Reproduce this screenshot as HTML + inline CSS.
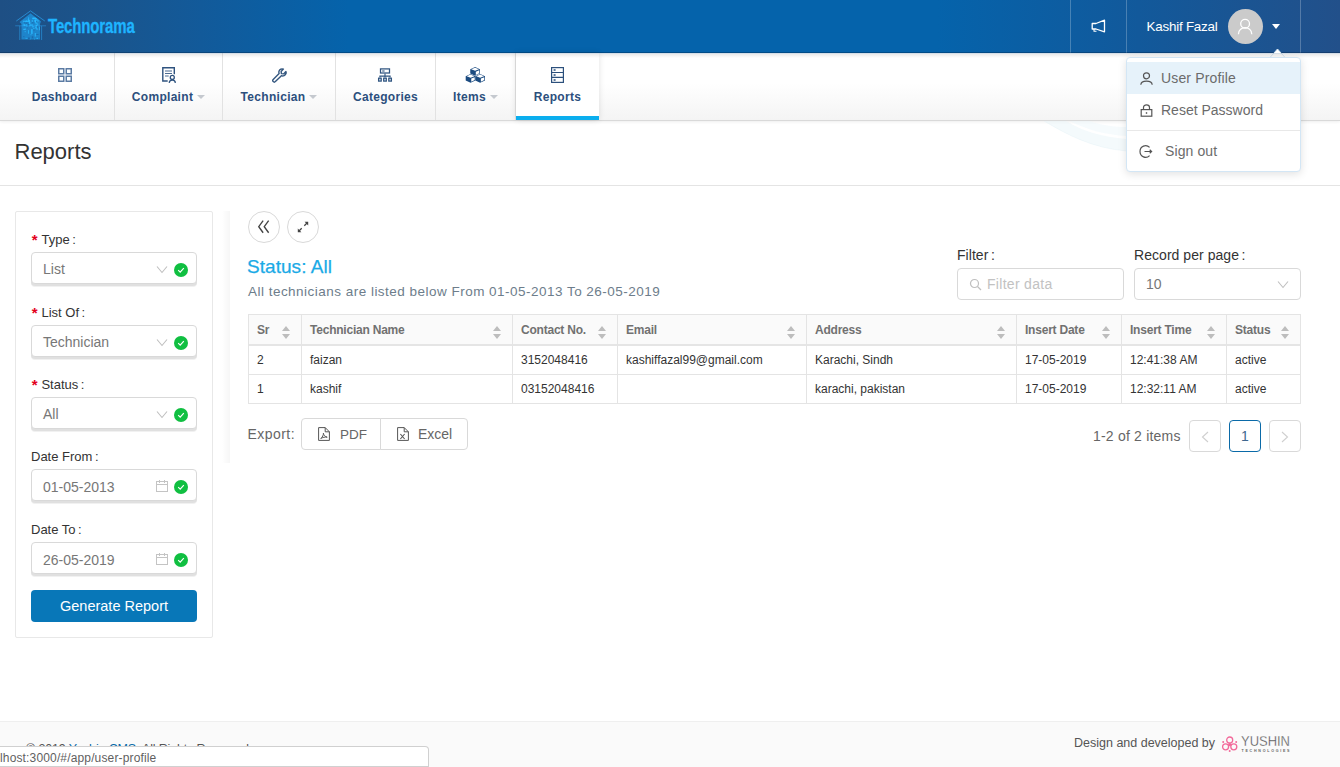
<!DOCTYPE html>
<html>
<head>
<meta charset="utf-8">
<title>Reports</title>
<style>
*{box-sizing:border-box;margin:0;padding:0}
html,body{width:1340px;height:767px;overflow:hidden;background:#fff;font-family:"Liberation Sans",sans-serif;color:#555}
.abs{position:absolute}
.t{position:absolute;white-space:nowrap;line-height:1}
#hdr{left:0;top:0;width:1340px;height:53px;background:linear-gradient(90deg,#1e4f84 0%,#1b548b 7%,#125a9a 15%,#0563ab 26%,#0563ab 70%,#12599b 85%,#22508a 100%)}
#hdr .vl{position:absolute;top:0;width:1px;height:53px;background:rgba(255,255,255,.24)}
#hdr:after{content:"";position:absolute;left:0;right:0;bottom:0;height:1px;background:rgba(0,20,50,.28)}
#hsh{left:0;top:53px;width:1340px;height:5px;background:linear-gradient(180deg,rgba(60,110,160,.28) 0%,rgba(0,0,0,.07) 30%,rgba(0,0,0,0) 100%);z-index:3}
#nav{left:0;top:53px;width:1340px;height:68px;background:linear-gradient(180deg,#ffffff 0%,#ffffff 45%,#f4f4f4 100%);border-bottom:1px solid #d9d9d9;box-shadow:0 1px 3px rgba(0,0,0,.07)}
.ni{position:absolute;top:0;height:67px;border-right:1px solid #e2e2e2}
.ni .lb{position:absolute;left:0;right:0;letter-spacing:.3px;top:37px;text-align:center;font-weight:bold;font-size:12px;color:#2c4f7d;line-height:14px;white-space:nowrap}
.ni svg{position:absolute}
.caret{display:inline-block;width:0;height:0;border-left:4px solid transparent;border-right:4px solid transparent;border-top:4px solid #c5c9cf;vertical-align:middle;margin-left:4px;position:relative;top:-1px}

#ptitle{left:14.5px;top:141px;font-size:22px;color:#333;letter-spacing:0}
#pline{left:0;top:185px;width:1340px;height:1px;background:#e4e4e4}
#card{left:15px;top:211px;width:198px;height:427px;border:1px solid #e8e8e8;border-radius:2px;background:#fff}
.flb{position:absolute;left:31px;font-size:13px;color:#333;white-space:nowrap;line-height:1;letter-spacing:0}
.flb b,.lb14 b{font-weight:normal;margin-left:2.5px}
.flb i{font-style:normal;color:#e3001b;font-size:15px;font-weight:bold;margin-right:4.6px;position:relative;top:1.2px;left:.8px;line-height:0;font-family:"Liberation Sans",sans-serif}
.fbox{position:absolute;left:31px;width:166px;height:32px;border:1px solid #d9d9d9;border-radius:4px;background:#fff;box-shadow:0 2px 0 #e0e0e0,0 3px 0 #f1f1f1}
.fbox .v{position:absolute;left:11px;top:8px;font-size:14px;color:#777;line-height:16px;white-space:nowrap}
.fbox .ok{position:absolute;left:142px;top:10px;width:14px;height:14px}
.fbox .chev{position:absolute;left:124px;top:12px;width:12px;height:9px}
.fbox .cal{position:absolute;left:123px;top:9px;width:14px;height:14px}
#gen{left:31px;top:590px;width:166px;height:32px;background:#0877b8;border-radius:4px;color:#fff;font-size:14.5px;text-align:center;line-height:32px}
#pshadow{left:222px;top:211px;width:8px;height:252px;background:linear-gradient(90deg,rgba(0,0,0,0) 0%,rgba(0,0,0,.035) 100%)}
.cbtn{position:absolute;top:211px;width:32px;height:32px;border:1px solid #d9d9d9;border-radius:50%;background:#fff}
#st{left:247px;top:257px;font-size:19px;color:#1baae6;letter-spacing:.05px;-webkit-text-stroke:.25px #1baae6}
#sub{left:248px;top:285px;font-size:13.5px;color:#6d7d8b;letter-spacing:.48px}

.lb14{position:absolute;font-size:14px;color:#333;white-space:nowrap;line-height:1;letter-spacing:.05px}
.ibox{position:absolute;top:268px;height:32px;border:1px solid #d9d9d9;border-radius:4px;background:#fff}
#tbl{left:248px;top:314px;width:1053px;height:90px;border:1px solid #e4e4e4;background:#fff}
#thead{left:0;top:0;width:1051px;height:31px;background:#fafafa;border-bottom:2px solid #e5e5e5}
.hl{position:absolute;left:0;width:1051px;height:1px;background:#e4e4e4}
.vl2{position:absolute;top:0;width:1px;height:88px;background:#e4e4e4}
.th{position:absolute;top:9px;font-size:12px;font-weight:bold;color:#717171;white-space:nowrap;line-height:1;letter-spacing:-.22px}
.td{position:absolute;font-size:12px;color:#333;white-space:nowrap;line-height:1}
.srt{position:absolute;top:10.5px;width:8px;height:13px}
#exl{left:247.5px;top:427px;font-size:14px;color:#666;letter-spacing:.45px}
.ebtn{position:absolute;top:418px;height:32px;border:1px solid #d9d9d9;background:#fff;font-size:14px;color:#666}
.ebtn span{position:absolute;top:8px;line-height:1;white-space:nowrap}
.ebtn svg{position:absolute;top:8px;width:12px;height:14px}
#pgt{left:1093px;top:429px;font-size:14px;color:#666;letter-spacing:.2px}
.pg{position:absolute;top:420px;width:32px;height:32px;border:1px solid #d9d9d9;border-radius:4px;background:#fff}

#logo-t{left:48px;top:17px;font-size:19.5px;font-weight:bold;color:#1eb4ff;transform-origin:0 0;transform:scaleX(.77);letter-spacing:-.2px;-webkit-text-stroke:.3px #1eb4ff}
#uname{left:1146.5px;top:19.5px;font-size:13.4px;color:#fff;letter-spacing:-.22px}
#avatar{left:1228px;top:9px;width:35px;height:35px;border-radius:50%;background:#cbcbcb}
#ucaret{left:1272px;top:24px;width:0;height:0;border-left:4.5px solid transparent;border-right:4.5px solid transparent;border-top:5px solid #fff}
#dd{left:1126px;top:57px;width:175px;height:115px;background:#fff;border:1px solid #d3e6f5;border-radius:4px;box-shadow:0 2px 8px rgba(0,0,0,.12)}
#ddarrow{left:1270px;top:49px;width:0;height:0;border-left:8px solid transparent;border-right:8px solid transparent;border-bottom:9px solid #fff}
.ddi{position:absolute;font-size:14px;color:#6b6b6b;white-space:nowrap;line-height:1}
#foot{left:0;top:721px;width:1340px;height:46px;background:#fafafa;border-top:1px solid #efefef}
#sbar{left:0;top:746px;width:429px;height:21px;border-bottom:none;background:#fff;border:1px solid #d0d0d0;border-left:none;border-radius:0 4px 0 0}
</style>
</head>
<body>
<!-- top header -->
<div id="hdr" class="abs">
  <div class="vl" style="left:1070px"></div>
  <div class="vl" style="left:1126px"></div>
  <div class="vl" style="left:1300px"></div>
</div>
<div id="hsh" class="abs"></div>
<!-- nav -->
<div id="nav" class="abs">
  <div class="ni" style="left:0;width:115px"><svg style="left:58px;top:15px" width="14" height="14" viewBox="0 0 14 14" fill="none" stroke="#5b7ba3" stroke-width="1.5"><rect x=".75" y=".75" width="5" height="5"/><rect x="8.25" y=".75" width="5" height="5"/><rect x=".75" y="8.25" width="5" height="5"/><rect x="8.25" y="8.25" width="5" height="5"/></svg><div class="lb" style="left:15px">Dashboard</div></div>
  <div class="ni" style="left:115px;width:108px"><svg style="left:46px;top:13px" width="16" height="18" viewBox="0 0 16 18" fill="none" stroke="#2f537f" stroke-width="1.4"><path d="M6.7 15 H1.8 V1.8 H13.3 V8.3"/><path d="M4 5 H11 M4 7.5 H11 M4 10 H7.7" stroke-width="1.1" stroke="#4d6d94"/><circle cx="11.3" cy="11.4" r="2" stroke-width="1.3"/><path d="M8.2 16.9 C8.6 13.3 14 13.3 14.4 16.9" stroke-width="1.3"/></svg><div class="lb">Complaint<span class="caret"></span></div></div>
  <div class="ni" style="left:223px;width:113px"><svg style="left:49px;top:15px" width="15" height="15" viewBox="0 0 15 15" fill="none" stroke="#34577f" stroke-width="1.4" stroke-linejoin="round"><path d="M13.9 3.6 L11.6 5.9 L9.4 5.6 L9.1 3.4 L11.4 1.1 C9.6 .4 7.6 1.3 7 3.2 C6.8 4 6.8 4.8 7.1 5.5 L1.2 11.4 C.6 12 .6 13 1.2 13.6 C1.8 14.2 2.8 14.2 3.4 13.6 L9.4 7.7 C11.2 8.4 13.3 7.5 14 5.6 C14.2 5 14.2 4.3 13.9 3.6 Z"/></svg><div class="lb">Technician<span class="caret"></span></div></div>
  <div class="ni" style="left:336px;width:100px"><svg style="left:41px;top:15px" width="16" height="14" viewBox="0 0 16 14" fill="none" stroke="#2f5480" stroke-width="1.25"><rect x="3.5" y=".9" width="9" height="4.1"/><path d="M5.2 3 H7.6" stroke-width="1.1"/><path d="M8 5.6 V8.1 M2.9 9.6 V8.1 H13.1 V9.6 M8 8.1 V9.6" stroke-width="1.1"/><rect x="1.6" y="10.2" width="2.6" height="2.9" fill="#dfe6ee"/><rect x="6.7" y="10.2" width="2.6" height="2.9" fill="#dfe6ee"/><rect x="11.8" y="10.2" width="2.6" height="2.9" fill="#dfe6ee"/></svg><div class="lb">Categories</div></div>
  <div class="ni" style="left:436px;width:80px"><svg style="left:29px;top:14px" width="21" height="17" viewBox="0 0 21 17"><path d="M10.10 0.10 L14.95 2.27 V6.62 L10.10 8.80 L5.25 6.62 V2.27 Z" fill="#1b4b80"/><path d="M10.10 0.70 L13.95 2.27 L10.10 3.85 L6.25 2.27 Z" fill="#fff"/><path d="M10.80 4.65 L14.25 3.27 V6.22 L10.80 7.90 Z" fill="#fff"/><path d="M5.55 7.00 L10.40 9.18 V13.52 L5.55 15.70 L0.70 13.52 V9.18 Z" fill="#1b4b80"/><path d="M5.55 7.60 L9.40 9.18 L5.55 10.75 L1.70 9.18 Z" fill="#fff"/><path d="M6.25 11.55 L9.70 10.18 V13.12 L6.25 14.80 Z" fill="#fff"/><path d="M15.15 7.00 L20.00 9.18 V13.52 L15.15 15.70 L10.30 13.52 V9.18 Z" fill="#1b4b80"/><path d="M15.15 7.60 L19.00 9.18 L15.15 10.75 L11.30 9.18 Z" fill="#fff"/><path d="M15.85 11.55 L19.30 10.18 V13.12 L15.85 14.80 Z" fill="#fff"/></svg><div class="lb">Items<span class="caret"></span></div></div>
  <div class="ni" id="act" style="left:516px;width:83px;background:#fff;border-right:none;box-shadow:0 0 6px rgba(0,0,0,.12)"><svg style="left:35px;top:14px" width="13" height="16" viewBox="0 0 13 16" fill="none" stroke="#2c507c" stroke-width="1.2"><rect x=".6" y=".6" width="11.8" height="14.8"/><path d="M.6 5.5 H12.4 M.6 10.4 H12.4"/><path d="M2.6 3 H4.6 M2.6 8 H4.6 M2.6 13 H4.6" stroke-width="1.4"/></svg><div class="lb">Reports</div><div class="abs" style="left:0;right:0;bottom:0;height:4px;background:#0baeee"></div></div>
</div>

<!-- page title -->
<svg class="abs" style="left:1030px;top:121px" width="110" height="50" viewBox="0 0 110 50"><path d="M14 0 C38 14 62 27 97 30 L97 18 C72 16 52 10 36 0 Z" fill="#e6f4f8" opacity=".45"/><path d="M40 0 C55 8 75 14 97 15 L97 6 C85 6 70 4 60 0 Z" fill="#ecf7fa" opacity=".45"/><path d="M14 0 C38 14 62 27 97 30" fill="none" stroke="#e6f3f7" stroke-width=".8" opacity=".6"/></svg>
<div id="ptitle" class="t">Reports</div>
<div id="pline" class="abs"></div>
<!-- sidebar card -->
<div id="card" class="abs"></div>
<div class="flb" style="top:233px"><i>*</i>Type<b>:</b></div>
<div class="fbox" style="top:252px"><div class="v">List</div><svg class="chev" viewBox="0 0 12 9" fill="none" stroke="#bfbfbf" stroke-width="1.1"><path d="M1 1.5 L6 7.5 L11 1.5"/></svg> <svg class="ok" viewBox="0 0 14 14"><circle cx="7" cy="7" r="7" fill="#10bf41"/><path d="M4.2 7.2 L6.2 9.2 L9.8 5.2" fill="none" stroke="#fff" stroke-width="1.15"/></svg></div>
<div class="flb" style="top:306px"><i>*</i>List Of<b>:</b></div>
<div class="fbox" style="top:325px"><div class="v">Technician</div><svg class="chev" viewBox="0 0 12 9" fill="none" stroke="#bfbfbf" stroke-width="1.1"><path d="M1 1.5 L6 7.5 L11 1.5"/></svg> <svg class="ok" viewBox="0 0 14 14"><circle cx="7" cy="7" r="7" fill="#10bf41"/><path d="M4.2 7.2 L6.2 9.2 L9.8 5.2" fill="none" stroke="#fff" stroke-width="1.15"/></svg></div>
<div class="flb" style="top:378px"><i>*</i>Status<b>:</b></div>
<div class="fbox" style="top:397px"><div class="v">All</div><svg class="chev" viewBox="0 0 12 9" fill="none" stroke="#bfbfbf" stroke-width="1.1"><path d="M1 1.5 L6 7.5 L11 1.5"/></svg> <svg class="ok" viewBox="0 0 14 14"><circle cx="7" cy="7" r="7" fill="#10bf41"/><path d="M4.2 7.2 L6.2 9.2 L9.8 5.2" fill="none" stroke="#fff" stroke-width="1.15"/></svg></div>
<div class="flb" style="top:450px">Date From<b>:</b></div>
<div class="fbox" style="top:469px"><div class="v" style="top:9px">01-05-2013</div><svg class="cal" viewBox="0 0 14 14" fill="none" stroke="#c4c4c4" stroke-width="1"><rect x="1.5" y="2.5" width="11" height="10"/><path d="M1.5 5.5 H12.5 M4.5 1 V4 M9.5 1 V4"/></svg> <svg class="ok" viewBox="0 0 14 14"><circle cx="7" cy="7" r="7" fill="#10bf41"/><path d="M4.2 7.2 L6.2 9.2 L9.8 5.2" fill="none" stroke="#fff" stroke-width="1.15"/></svg></div>
<div class="flb" style="top:523px">Date To<b>:</b></div>
<div class="fbox" style="top:542px"><div class="v" style="top:9px">26-05-2019</div><svg class="cal" viewBox="0 0 14 14" fill="none" stroke="#c4c4c4" stroke-width="1"><rect x="1.5" y="2.5" width="11" height="10"/><path d="M1.5 5.5 H12.5 M4.5 1 V4 M9.5 1 V4"/></svg> <svg class="ok" viewBox="0 0 14 14"><circle cx="7" cy="7" r="7" fill="#10bf41"/><path d="M4.2 7.2 L6.2 9.2 L9.8 5.2" fill="none" stroke="#fff" stroke-width="1.15"/></svg></div>
<div id="gen" class="abs">Generate Report</div>
<!-- right panel -->
<div id="pshadow" class="abs"></div>
<div class="cbtn" style="left:248px"><svg class="abs" style="left:7.3px;top:7.3px" width="15.4" height="15.4" viewBox="0 0 14 14" fill="none" stroke="#444" stroke-width="1.25"><path d="M6.5 1.5 L2.5 7 L6.5 12.5 M11.5 1.5 L7.5 7 L11.5 12.5"/></svg></div>
<div class="cbtn" style="left:287px"><svg class="abs" style="left:9px;top:9px" width="12" height="12" viewBox="0 0 12 12" fill="none" stroke="#444" stroke-width="1.2"><path d="M7.3 4.7 L10.5 1.5 M4.7 7.3 L1.5 10.5" stroke-width="1.3"/><path d="M7.6 .8 H11.2 V4.4 Z M.8 7.6 V11.2 H4.4 Z" fill="#444" stroke="none"/></svg></div>
<div id="st" class="t">Status: All</div>
<div id="sub" class="t">All technicians are listed below From 01-05-2013 To 26-05-2019</div>

<div class="lb14" style="left:957px;top:248px">Filter<b>:</b></div>
<div class="ibox" style="left:957px;width:167px"><svg class="abs" style="left:11px;top:9px" width="13" height="13" viewBox="0 0 13 13" fill="none" stroke="#bfbfbf" stroke-width="1.2"><circle cx="5.5" cy="5.5" r="4"/><path d="M8.5 8.5 L12 12"/></svg><div class="t" style="left:29px;top:8px;font-size:14px;color:#c2c2c2;letter-spacing:.3px">Filter data</div></div>
<div class="lb14" style="left:1134px;top:248px">Record per page<b>:</b></div>
<div class="ibox" style="left:1134px;width:167px"><div class="t" style="left:11px;top:8px;font-size:14px;color:#777">10</div><svg class="abs" style="left:142px;top:11px" width="12" height="9" viewBox="0 0 12 9" fill="none" stroke="#bfbfbf" stroke-width="1.1"><path d="M1 1.5 L6 7.5 L11 1.5"/></svg></div>
<div id="tbl" class="abs"><div id="thead" class="abs"></div><div class="hl" style="top:59px"></div><div class="vl2" style="left:52px"></div><div class="vl2" style="left:263px"></div><div class="vl2" style="left:368px"></div><div class="vl2" style="left:557px"></div><div class="vl2" style="left:767px"></div><div class="vl2" style="left:872px"></div><div class="vl2" style="left:977px"></div><div class="th" style="left:8px">Sr</div><svg class="srt" style="left:33px" viewBox="0 0 8 13"><path d="M4 0 L8 5 H0 Z M4 13 L8 8 H0 Z" fill="#bdbdbd"/></svg><div class="td" style="left:8px;top:39px">2</div><div class="td" style="left:8px;top:68px">1</div><div class="th" style="left:61px">Technician Name</div><svg class="srt" style="left:244px" viewBox="0 0 8 13"><path d="M4 0 L8 5 H0 Z M4 13 L8 8 H0 Z" fill="#bdbdbd"/></svg><div class="td" style="left:61px;top:39px">faizan</div><div class="td" style="left:61px;top:68px">kashif</div><div class="th" style="left:272px">Contact No.</div><svg class="srt" style="left:349px" viewBox="0 0 8 13"><path d="M4 0 L8 5 H0 Z M4 13 L8 8 H0 Z" fill="#bdbdbd"/></svg><div class="td" style="left:272px;top:39px">3152048416</div><div class="td" style="left:272px;top:68px">03152048416</div><div class="th" style="left:377px">Email</div><svg class="srt" style="left:538px" viewBox="0 0 8 13"><path d="M4 0 L8 5 H0 Z M4 13 L8 8 H0 Z" fill="#bdbdbd"/></svg><div class="td" style="left:377px;top:39px">kashiffazal99@gmail.com</div><div class="td" style="left:377px;top:68px"></div><div class="th" style="left:566px">Address</div><svg class="srt" style="left:748px" viewBox="0 0 8 13"><path d="M4 0 L8 5 H0 Z M4 13 L8 8 H0 Z" fill="#bdbdbd"/></svg><div class="td" style="left:566px;top:39px">Karachi, Sindh</div><div class="td" style="left:566px;top:68px">karachi, pakistan</div><div class="th" style="left:776px">Insert Date</div><svg class="srt" style="left:853px" viewBox="0 0 8 13"><path d="M4 0 L8 5 H0 Z M4 13 L8 8 H0 Z" fill="#bdbdbd"/></svg><div class="td" style="left:776px;top:39px">17-05-2019</div><div class="td" style="left:776px;top:68px">17-05-2019</div><div class="th" style="left:881px">Insert Time</div><svg class="srt" style="left:958px" viewBox="0 0 8 13"><path d="M4 0 L8 5 H0 Z M4 13 L8 8 H0 Z" fill="#bdbdbd"/></svg><div class="td" style="left:881px;top:39px">12:41:38 AM</div><div class="td" style="left:881px;top:68px">12:32:11 AM</div><div class="th" style="left:986px">Status</div><svg class="srt" style="left:1032px" viewBox="0 0 8 13"><path d="M4 0 L8 5 H0 Z M4 13 L8 8 H0 Z" fill="#bdbdbd"/></svg><div class="td" style="left:986px;top:39px">active</div><div class="td" style="left:986px;top:68px">active</div></div>
<div id="exl" class="t">Export:</div>
<div class="ebtn" style="left:301px;width:80px;border-radius:4px 0 0 4px"><svg style="left:16px" viewBox="0 0 12 14" fill="none" stroke="#555" stroke-width="1"><path d="M0.6 0.6 H7.2 L11.4 4.8 V13.4 H0.6 Z M7.2 0.6 V4.8 H11.4"/><path d="M2.8 11.5 C4.5 10 5.6 8 5.4 6.2 C5.6 8 7 9.6 9.2 10.2 C7 9.8 4.8 10.3 2.8 11.5" stroke-width="1"/></svg><span style="left:38px;font-size:13.5px;top:8.5px">PDF</span></div>
<div class="ebtn" style="left:380px;width:88px;border-radius:0 4px 4px 0"><svg style="left:16px" viewBox="0 0 12 14" fill="none" stroke="#555" stroke-width="1"><path d="M0.6 0.6 H7.2 L11.4 4.8 V13.4 H0.6 Z M7.2 0.6 V4.8 H11.4"/><path d="M3.4 7 L7.6 12 M7.6 7 L3.4 12" stroke-width="1.1"/></svg><span style="left:37px">Excel</span></div>
<div id="pgt" class="t">1-2 of 2 items</div>
<div class="pg" style="left:1189px"><svg class="abs" style="left:11px;top:10px" width="8" height="12" viewBox="0 0 8 12" fill="none" stroke="#cfcfcf" stroke-width="1.1"><path d="M7 1 L1.5 6 L7 11"/></svg></div>
<div class="pg" style="left:1229px;border-color:#0a6aa8"><div class="t" style="left:0;width:30px;text-align:center;top:8px;font-size:14px;color:#40688f">1</div></div>
<div class="pg" style="left:1269px"><svg class="abs" style="left:11px;top:10px" width="8" height="12" viewBox="0 0 8 12" fill="none" stroke="#cfcfcf" stroke-width="1.1"><path d="M1 1 L6.5 6 L1 11"/></svg></div>

<!-- header content -->
<svg class="abs" id="logo-i" style="left:14px;top:9px" width="34" height="33" viewBox="0 0 34 33"><path d="M2.3 12.0 L16.5 1.9 L30.8 12.0" fill="none" stroke="#2a9be6" stroke-width="0.9" opacity=".85"/><path d="M1.2 16.8 H32.0" fill="none" stroke="#2a9be6" stroke-width="0.9" opacity=".6"/><path d="M5.8 16.8 V31.0 M27.6 16.8 V31.0" fill="none" stroke="#2a9be6" stroke-width="0.9" opacity=".7"/><path d="M16.5 4.2 L27.0 12.5 L26.0 15.0 L26.0 30.6 L7.4 30.6 L7.4 15.0 L5.5 13.0 Z" fill="#1fa4f6" opacity=".62"/><g clip-path="url(#hc)"><rect x="13.5" y="10.5" width="1.2" height="0.9" fill="#29b8ff" opacity="0.7"/><rect x="14.2" y="8.3" width="0.9" height="4.8" fill="#29b8ff" opacity="0.85"/><rect x="15.1" y="12.5" width="1.1" height="4.8" fill="#29b8ff" opacity="1"/><rect x="10.1" y="12.1" width="4" height="0.9" fill="#29b8ff" opacity="0.85"/><rect x="8.8" y="12.1" width="0.9" height="4.8" fill="#29b8ff" opacity="0.7"/><rect x="17.2" y="20.1" width="1.4" height="4.8" fill="#29b8ff" opacity="1"/><rect x="17.7" y="11.3" width="1.2" height="1.4" fill="#29b8ff" opacity="1"/><rect x="9.0" y="11.7" width="4" height="1.1" fill="#29b8ff" opacity="0.85"/><rect x="18.0" y="17.4" width="2.2" height="0.9" fill="#29b8ff" opacity="1"/><rect x="21.3" y="8.9" width="2.2" height="1.4" fill="#29b8ff" opacity="0.85"/><rect x="20.4" y="13.6" width="1.2" height="0.9" fill="#29b8ff" opacity="0.7"/><rect x="20.9" y="10.5" width="1.1" height="3.5999999999999996" fill="#29b8ff" opacity="1"/><rect x="9.3" y="19.8" width="2.2" height="1.1" fill="#29b8ff" opacity="1"/><rect x="16.4" y="25.3" width="1.2" height="0.9" fill="#29b8ff" opacity="0.85"/><rect x="19.8" y="8.5" width="2.2" height="1.4" fill="#29b8ff" opacity="1"/><rect x="22.0" y="13.5" width="1.4" height="3.5999999999999996" fill="#29b8ff" opacity="0.85"/><rect x="14.0" y="21.1" width="0.9" height="3.5999999999999996" fill="#29b8ff" opacity="0.85"/><rect x="10.2" y="12.7" width="1.1" height="3.5999999999999996" fill="#29b8ff" opacity="0.85"/><rect x="14.8" y="13.4" width="1.6" height="1.1" fill="#29b8ff" opacity="0.85"/><rect x="20.0" y="29.7" width="0.9" height="3.5999999999999996" fill="#29b8ff" opacity="0.7"/><rect x="10.6" y="22.1" width="1.2" height="1.1" fill="#29b8ff" opacity="0.7"/><rect x="15.1" y="15.5" width="4" height="1.1" fill="#29b8ff" opacity="1"/><rect x="22.6" y="28.9" width="1.2" height="1.1" fill="#29b8ff" opacity="1"/><rect x="21.6" y="16.0" width="1.1" height="3.5999999999999996" fill="#29b8ff" opacity="1"/><rect x="14.8" y="11.4" width="1.1" height="1.92" fill="#29b8ff" opacity="0.85"/><rect x="18.2" y="9.4" width="4" height="0.9" fill="#29b8ff" opacity="0.85"/><rect x="18.4" y="8.6" width="1.6" height="1.4" fill="#29b8ff" opacity="1"/><rect x="12.3" y="15.0" width="1.1" height="2.64" fill="#29b8ff" opacity="0.85"/><rect x="24.9" y="17.7" width="1.1" height="3.5999999999999996" fill="#29b8ff" opacity="0.7"/><rect x="20.7" y="24.0" width="1.4" height="3.5999999999999996" fill="#29b8ff" opacity="0.7"/><rect x="11.5" y="28.9" width="2.2" height="0.9" fill="#29b8ff" opacity="0.7"/><rect x="20.9" y="13.9" width="1.2" height="1.4" fill="#29b8ff" opacity="1"/><rect x="14.2" y="10.8" width="1.6" height="1.4" fill="#29b8ff" opacity="1"/><rect x="13.6" y="12.1" width="1.6" height="0.9" fill="#29b8ff" opacity="1"/><rect x="21.7" y="11.6" width="3" height="1.1" fill="#29b8ff" opacity="0.7"/><rect x="21.4" y="17.9" width="1.6" height="1.4" fill="#29b8ff" opacity="0.85"/><rect x="15.6" y="28.6" width="1.1" height="2.64" fill="#29b8ff" opacity="0.7"/><rect x="11.9" y="11.5" width="1.6" height="1.1" fill="#29b8ff" opacity="1"/><rect x="22.3" y="18.0" width="1.4" height="2.64" fill="#29b8ff" opacity="1"/><rect x="10.0" y="15.9" width="1.6" height="1.1" fill="#29b8ff" opacity="0.85"/><rect x="21.4" y="14.6" width="3" height="1.1" fill="#29b8ff" opacity="0.7"/><rect x="20.3" y="10.9" width="0.9" height="1.92" fill="#29b8ff" opacity="0.85"/><rect x="21.7" y="10.4" width="4" height="1.1" fill="#29b8ff" opacity="0.85"/><rect x="10.7" y="19.6" width="1.2" height="0.9" fill="#29b8ff" opacity="1"/><rect x="19.0" y="19.1" width="1.6" height="1.1" fill="#29b8ff" opacity="0.7"/><rect x="21.4" y="14.8" width="1.5" height="0.8" fill="#17589a" opacity=".6"/><rect x="13.4" y="15.3" width="2.5" height="1" fill="#17589a" opacity=".6"/><rect x="12.9" y="18.5" width="1" height="0.8" fill="#17589a" opacity=".6"/><rect x="22.7" y="17.4" width="1.5" height="2" fill="#17589a" opacity=".6"/><rect x="17.8" y="27.3" width="1.5" height="2" fill="#17589a" opacity=".6"/><rect x="11.0" y="13.7" width="2.5" height="0.8" fill="#17589a" opacity=".6"/><rect x="22.1" y="25.0" width="2.5" height="0.8" fill="#17589a" opacity=".6"/><rect x="20.6" y="13.7" width="1" height="1" fill="#17589a" opacity=".6"/><rect x="18.3" y="13.2" width="1" height="1" fill="#17589a" opacity=".6"/><rect x="19.2" y="20.6" width="1.5" height="0.8" fill="#17589a" opacity=".6"/><rect x="22.2" y="12.0" width="1" height="1" fill="#17589a" opacity=".6"/><rect x="9.6" y="12.8" width="1.5" height="2" fill="#17589a" opacity=".6"/><rect x="9.4" y="27.1" width="1" height="1" fill="#17589a" opacity=".6"/><rect x="13.9" y="28.5" width="2.5" height="2" fill="#17589a" opacity=".6"/></g><defs><clipPath id="hc"><path d="M16.5 4.2 L27.0 12.5 L26.0 15.0 L26.0 30.6 L7.4 30.6 L7.4 15.0 L5.5 13.0 Z"/></clipPath></defs></svg>
<div id="logo-t" class="t">Technorama</div>
<svg class="abs" style="left:1091px;top:19px" width="15" height="15" viewBox="0 0 15 15" fill="none" stroke="#fff" stroke-width="1.3" stroke-linejoin="round"><path d="M13.5 1.2 V12.8 L5 10 H1.2 V4.5 H5 Z"/><path d="M3 10 V12.2 H5.5" stroke-width="1.1"/></svg>
<div id="uname" class="t">Kashif Fazal</div>
<div id="avatar" class="abs"><svg class="abs" style="left:0;top:0" width="35" height="35" viewBox="0 0 35 35" fill="none" stroke="#fff" stroke-width="1.3"><circle cx="17.1" cy="14.8" r="4.4"/><path d="M10.4 25.2 C10.8 16.6 23.4 16.6 23.8 25.2"/></svg></div>
<div id="ucaret" class="abs"></div>
<!-- dropdown -->
<svg class="abs" style="left:1269px;top:48px" width="17" height="10" viewBox="0 0 17 10"><path d="M0.5 10 L8.5 1 L16.5 10 Z" fill="#fff" stroke="#d8e8f4" stroke-width="1"/></svg>
<div id="dd" class="abs">
  <div class="abs" style="left:0;top:4px;width:173px;height:32px;background:#e6f2fa"></div>
  <svg class="abs" style="left:13px;top:14px" width="13" height="13" viewBox="0 0 13 13" fill="none" stroke="#555" stroke-width="1.2"><circle cx="6.5" cy="3.8" r="3"/><path d="M.8 12.8 C1.2 8 11.8 8 12.2 12.8"/></svg>
  <div class="ddi" style="left:34px;top:13px;letter-spacing:.15px">User Profile</div>
  <svg class="abs" style="left:13px;top:46px" width="13" height="13" viewBox="0 0 13 13" fill="none" stroke="#555" stroke-width="1.2"><rect x="1.2" y="5.6" width="10.6" height="6.6"/><path d="M3.5 5.6 V3.6 C3.5 0 9.5 0 9.5 3.6 V5.6"/><path d="M5.8 9 H7.2" stroke-width="1.6"/></svg>
  <div class="ddi" style="left:34px;top:45px">Reset Password</div>
  <div class="abs" style="left:0;top:72px;width:173px;height:1px;background:#e8e8e8"></div>
  <svg class="abs" style="left:12px;top:87px" width="14" height="13" viewBox="0 0 14 13" fill="none" stroke="#555" stroke-width="1.2"><path d="M10.6 2.4 C7 -1.2 1 1.3 1 6.5 C1 11.7 7 14.2 10.6 10.6"/><path d="M5.5 6.5 H12.5 M10.7 4.8 L12.6 6.5 L10.7 8.2"/></svg>
  <div class="ddi" style="left:38px;top:86px;letter-spacing:.1px">Sign out</div>
</div>
<!-- footer -->
<div id="foot" class="abs">
  <div class="t" style="left:26px;top:21px;font-size:12.5px;color:#555;letter-spacing:-.15px">© 2019 <span style="color:#0a6aa8">Yushin CMS</span>. All Rights Reserved.</div>
  <div class="t" style="left:1074px;top:15px;font-size:12.5px;color:#555">Design and developed by</div><svg class="abs" style="left:1221px;top:13px;overflow:visible" width="72" height="20" viewBox="0 0 72 20">
<g fill="none" stroke="#f2699a" stroke-width="1.3"><circle cx="8.7" cy="5" r="3"/><circle cx="4.6" cy="11.8" r="3"/><circle cx="12.8" cy="11.8" r="3"/></g>
<g fill="#f2699a"><circle cx="8.7" cy="9.6" r="1.6"/><circle cx="2.2" cy="7" r="1"/><circle cx="15.2" cy="7" r="1"/><circle cx="8.7" cy="16" r="1"/></g>
<text x="20" y="11.3" font-family="Liberation Sans, sans-serif" font-size="15.5" fill="#4a4a4a" textLength="49" lengthAdjust="spacingAndGlyphs" stroke="#fafafa" stroke-width=".35">YUSHIN</text>
<text x="20.5" y="17" font-family="Liberation Sans, sans-serif" font-size="3.6" font-weight="bold" fill="#666" textLength="48" lengthAdjust="spacing">TECHNOLOGIES</text>
</svg>
</div>
<div id="sbar" class="abs"><div class="t" style="left:0;top:5px;font-size:12px;color:#5f5f5f;letter-spacing:.15px">lhost:3000/#/app/user-profile</div></div>
</body>
</html>
